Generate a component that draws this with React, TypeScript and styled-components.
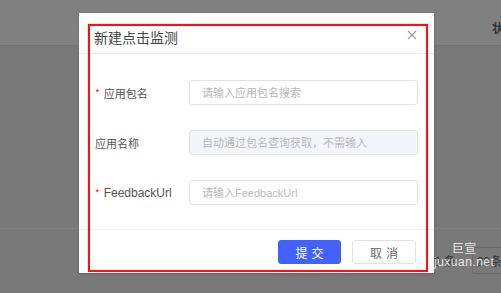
import React from "react";
import styled, { createGlobalStyle } from "styled-components";

const Global = createGlobalStyle`
  html, body { margin: 0; padding: 0; }
  body {
    width: 501px; height: 293px; overflow: hidden;
    background: #7a7a7a;
    font-family: "Liberation Sans", "Noto Sans CJK SC", sans-serif;
  }
`;

const Page = styled.div`
  position: relative;
  width: 501px;
  height: 293px;
  display: flex;
  flex-direction: column;
  background: #797979;
`;

const TopBar = styled.div`
  height: 46px;
  border-bottom: 1px solid #727272;
  background: #808080;
  display: flex;
  justify-content: flex-end;
  align-items: center;
  box-sizing: border-box;
`;

const TopLabel = styled.span`
  font-size: 12px;
  font-weight: bold;
  color: #333;
  margin-right: -3px;
  margin-top: 10px;
`;

const Content = styled.div`
  flex: 1;
  display: flex;
  flex-direction: column;
`;

const Spacer = styled.div`
  height: 182px;
  border-bottom: 1px solid #808080;
`;

const Pager = styled.div`
  display: flex;
  justify-content: flex-end;
  align-items: center;
  gap: 16px;
  padding-top: 18px;
  margin-right: -8px;
`;

const PagerText = styled.span`
  font-size: 12px;
  color: #333;
`;

const PagerBox = styled.span`
  font-size: 12px;
  color: #333;
  border: 1px solid #6a6a6a;
  border-radius: 2px;
  padding: 4px 6px 4px 4px;
`;

const Watermark = styled.div`
  position: absolute;
  left: 434px;
  top: 243px;
  display: flex;
  flex-direction: column;
  align-items: center;
  color: rgba(255, 255, 255, 0.85);
  font-size: 12px;
  line-height: 13px;
  letter-spacing: 0.5px;
`;

const Modal = styled.div`
  position: absolute;
  left: 79px;
  top: 13px;
  width: 355px;
  height: 260px;
  background: #fff;
  display: flex;
  flex-direction: column;
  box-shadow: 0 1px 3px rgba(0, 0, 0, 0.2);
`;

const Header = styled.div`
  height: 41px;
  box-sizing: border-box;
  border-bottom: 1px solid #ececec;
  display: flex;
  align-items: center;
  justify-content: space-between;
  padding: 0 17px 0 15px;
`;

const Title = styled.span`
  font-family: "Noto Sans CJK SC", sans-serif;
  font-size: 14px;
  color: #444;
  margin-top: 7px;
`;

const Close = styled.span`
  display: flex;
  margin-top: 3px;
`;

const Body = styled.div`
  height: 175px;
  box-sizing: border-box;
  padding: 26px 16px 0 16px;
  display: flex;
  flex-direction: column;
  gap: 25px;
`;

const Row = styled.div`
  display: flex;
  align-items: center;
  height: 25px;
`;

const Label = styled.div`
  width: 94px;
  font-family: "Noto Sans CJK SC", sans-serif;
  font-size: 11px;
  color: #555;
  display: flex;
  align-items: center;
`;

const LatinLabel = styled.span`
  font-family: "Liberation Sans", sans-serif;
  font-size: 12px;
`;

const Star = styled.span`
  color: #f5222d;
  margin-right: 4px;
  font-size: 10px;
`;

const Input = styled.input<{ $disabled?: boolean }>`
  flex: 1;
  height: 25px;
  box-sizing: border-box;
  border: 1px solid #e3e3e3;
  border-radius: 3px;
  background: ${(p) => (p.$disabled ? "#f4f5f8" : "#fff")};
  padding: 0 12px;
  font-family: "Liberation Sans", "Noto Sans CJK SC", sans-serif;
  font-size: 11px;
  outline: none;
  &::placeholder { color: #b9b9b9; }
`;

const Footer = styled.div`
  flex: 1;
  border-top: 1px solid #efefef;
  display: flex;
  justify-content: flex-end;
  align-items: flex-start;
  padding: 10px 18px 0 0;
  gap: 11px;
`;

const Button = styled.button<{ $primary?: boolean }>`
  width: ${(p) => (p.$primary ? 63 : 64)}px;
  height: 24px;
  border-radius: 3px;
  font-family: "Noto Sans CJK SC", sans-serif;
  font-size: 12px;
  letter-spacing: 4px;
  padding: 0 0 0 4px;
  border: 1px solid ${(p) => (p.$primary ? "#4060ff" : "#e2e2e2")};
  background: ${(p) => (p.$primary ? "#4361ff" : "#fff")};
  color: ${(p) => (p.$primary ? "#fff" : "#666")};
`;

const Annotation = styled.div`
  position: absolute;
  left: 9px;
  top: 11px;
  width: 340px;
  height: 248px;
  box-sizing: border-box;
  border: 2px solid #ff1010;
  box-shadow: 0 0 1px rgba(255, 0, 0, 0.5);
  pointer-events: none;
`;

export default function App() {
  return (
    <>
      <Global />
      <Page>
        <TopBar>
          <TopLabel>状</TopLabel>
        </TopBar>
        <Content>
          <Spacer />
          <Pager>
            <PagerText>0 条</PagerText>
            <PagerBox>20条</PagerBox>
          </Pager>
        </Content>
        <Watermark>
          <span>巨宣</span>
          <span>juxuan.net</span>
        </Watermark>
        <Modal>
          <Header>
            <Title>新建点击监测</Title>
            <Close>
              <svg width="10" height="10" viewBox="0 0 10 10">
                <path d="M1 1 L9 9 M9 1 L1 9" stroke="#9a9a9a" strokeWidth="1.2" fill="none" />
              </svg>
            </Close>
          </Header>
          <Body>
            <Row>
              <Label>
                <Star>*</Star>应用包名
              </Label>
              <Input placeholder="请输入应用包名搜索" />
            </Row>
            <Row>
              <Label>应用名称</Label>
              <Input $disabled placeholder="自动通过包名查询获取，不需输入" readOnly />
            </Row>
            <Row>
              <Label>
                <Star>*</Star>
                <LatinLabel>FeedbackUrl</LatinLabel>
              </Label>
              <Input placeholder="请输入FeedbackUrl" />
            </Row>
          </Body>
          <Footer>
            <Button $primary>提交</Button>
            <Button>取消</Button>
          </Footer>
          <Annotation />
        </Modal>
      </Page>
    </>
  );
}
